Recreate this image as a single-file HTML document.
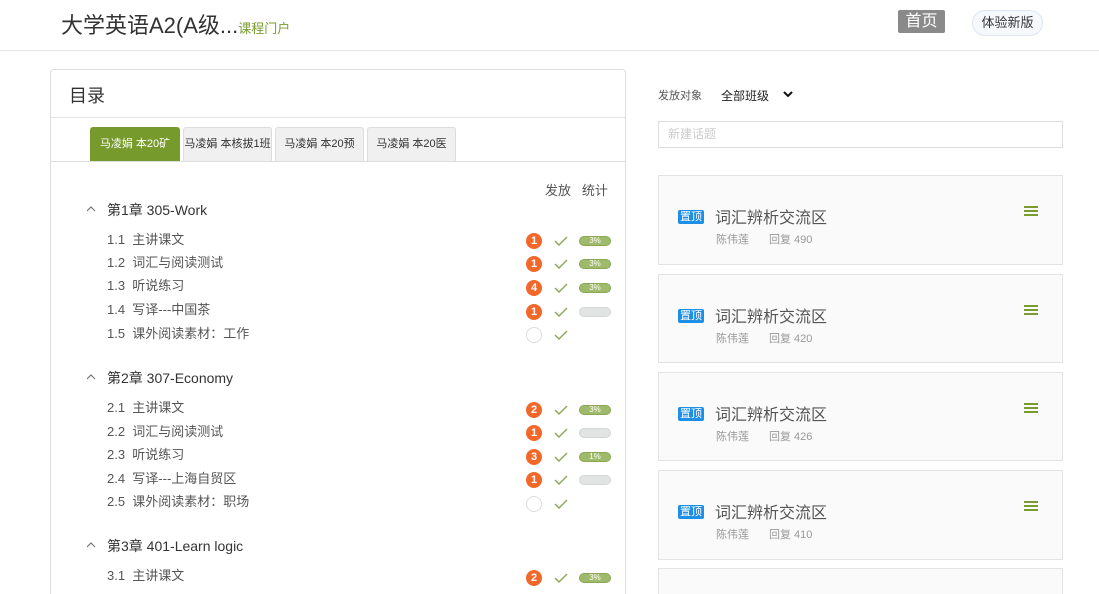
<!DOCTYPE html>
<html style="width:1099px;height:594px;overflow:hidden"><head><meta charset="utf-8"><style>
*{margin:0;padding:0;box-sizing:border-box}
body{width:1099px;height:594px;overflow:hidden;background:#fff;font-family:"Liberation Sans","Noto Sans CJK SC",sans-serif;position:relative;color:#333}
.a{position:absolute;white-space:nowrap}
.row{position:absolute;height:20px;line-height:20px;font-size:13px;color:#555;white-space:nowrap}
.ch{font-size:14px;color:#333}
.b{position:absolute;left:526px;width:16px;height:16px;border-radius:50%;background:#f2682a;color:#fff;font-size:11px;font-weight:bold;text-align:center;line-height:16px}
.c{position:absolute;left:526px;width:16px;height:16px;border-radius:50%;border:1.5px solid #ddd}
.k{position:absolute;left:554px;width:14px;height:10px}
.p{position:absolute;left:579px;width:32px;height:10px;border-radius:5px;background:#9fba6a;border:1px solid #8aa756;color:#fff;font-size:8px;text-align:center;line-height:8px}
.p.e{background:#e2e4e4;border-color:#d3d6d6}
.card{position:absolute;left:658px;width:405px;background:#fafafa;border:1px solid #e3e3e3}
.tag{position:absolute;left:19px;top:34px;background:#1e8fe6;color:#fff;font-size:11px;padding:0 2px;height:14px;line-height:14px;border-radius:2px}
.tt{position:absolute;left:56px;top:28px;font-size:16px;color:#555}
.mt{position:absolute;left:57px;top:55px;font-size:11px;color:#999}
.mt span{margin-left:20px}
.hb{position:absolute;right:24px;top:30px;width:14px}
.hb i{display:block;height:2px;background:#7a9c2e;margin-bottom:2px}
.tab{position:absolute;top:127px;width:89px;height:34px;background:#f0f0f0;border:1px solid #ddd;border-bottom:none;font-size:11px;text-align:center;line-height:33px;border-radius:3px 3px 0 0;color:#333;overflow:hidden}
</style></head><body>
<div class="a" style="left:61px;top:8px;font-size:22px;color:#333">大学英语A2(A级...<span style="font-size:13px;color:#7a9c2e">课程门户</span></div>
<div class="a" style="left:898px;top:10px;width:47px;height:23px;background:#8a8a8a;color:#fff;font-size:16px;text-align:center;line-height:23px;border-radius:2px">首页</div>
<div class="a" style="left:972px;top:10px;width:71px;height:26px;border:1px solid #dde6f0;background:#f6f9fc;border-radius:13px;font-size:13px;text-align:center;line-height:24px;color:#333">体验新版</div>
<div class="a" style="left:0;top:50px;width:1099px;height:1px;background:#e5e5e5"></div>

<div class="a" style="left:50px;top:69px;width:576px;height:525px;border:1px solid #ddd;border-bottom:none;border-radius:4px 4px 0 0"></div>
<div class="a" style="left:69px;top:82px;font-size:18px;color:#333">目录</div>
<div class="a" style="left:51px;top:117px;width:574px;height:1px;background:#e3e3e3"></div>
<div class="a" style="left:51px;top:161px;width:574px;height:1px;background:#ddd"></div>
<div class="a" style="left:90px;top:127px;width:90px;height:34px;background:#769a2c;color:#fff;font-size:11px;text-align:center;line-height:34px;border-radius:3px 3px 0 0">马凌娟 本20矿</div>
<div class="tab" style="left:183px">马凌娟 本核拔1班</div>
<div class="tab" style="left:275px">马凌娟 本20预</div>
<div class="tab" style="left:367px">马凌娟 本20医</div>
<div class="a" style="left:545px;top:180px;font-size:13px;color:#555">发放&nbsp;&nbsp;&nbsp;统计</div>

<svg class="a" style="left:0;top:0" width="0" height="0"><defs><path id="ck" d="M1 5 L5 9 L13 1" fill="none" stroke="#8aa756" stroke-width="1.4"/><path id="ch" d="M0 5 L4 1 L8 5" fill="none" stroke="#777" stroke-width="1.2"/></defs></svg>

<svg class="a" style="left:87px;top:206px" width="9" height="7"><use href="#ch"/></svg>
<div class="row ch" style="left:107px;top:200px">第1章 305-Work</div>
<div class="row" style="left:107px;top:230px">1.1&nbsp;&nbsp;主讲课文</div>
<div class="b" style="top:233px">1</div><svg class="k" style="top:236px"><use href="#ck"/></svg><div class="p" style="top:236px">3%</div>
<div class="row" style="left:107px;top:253px">1.2&nbsp;&nbsp;词汇与阅读测试</div>
<div class="b" style="top:256px">1</div><svg class="k" style="top:259px"><use href="#ck"/></svg><div class="p" style="top:259px">3%</div>
<div class="row" style="left:107px;top:276px">1.3&nbsp;&nbsp;听说练习</div>
<div class="b" style="top:280px">4</div><svg class="k" style="top:283px"><use href="#ck"/></svg><div class="p" style="top:283px">3%</div>
<div class="row" style="left:107px;top:300px">1.4&nbsp;&nbsp;写译---中国茶</div>
<div class="b" style="top:304px">1</div><svg class="k" style="top:307px"><use href="#ck"/></svg><div class="p e" style="top:307px"></div>
<div class="row" style="left:107px;top:324px">1.5&nbsp;&nbsp;课外阅读素材：工作</div>
<div class="c" style="top:327px"></div><svg class="k" style="top:330px"><use href="#ck"/></svg>

<svg class="a" style="left:87px;top:374px" width="9" height="7"><use href="#ch"/></svg>
<div class="row ch" style="left:107px;top:368px">第2章 307-Economy</div>
<div class="row" style="left:107px;top:398px">2.1&nbsp;&nbsp;主讲课文</div>
<div class="b" style="top:402px">2</div><svg class="k" style="top:405px"><use href="#ck"/></svg><div class="p" style="top:405px">3%</div>
<div class="row" style="left:107px;top:422px">2.2&nbsp;&nbsp;词汇与阅读测试</div>
<div class="b" style="top:425px">1</div><svg class="k" style="top:428px"><use href="#ck"/></svg><div class="p e" style="top:428px"></div>
<div class="row" style="left:107px;top:445px">2.3&nbsp;&nbsp;听说练习</div>
<div class="b" style="top:449px">3</div><svg class="k" style="top:452px"><use href="#ck"/></svg><div class="p" style="top:452px">1%</div>
<div class="row" style="left:107px;top:469px">2.4&nbsp;&nbsp;写译---上海自贸区</div>
<div class="b" style="top:472px">1</div><svg class="k" style="top:475px"><use href="#ck"/></svg><div class="p e" style="top:475px"></div>
<div class="row" style="left:107px;top:492px">2.5&nbsp;&nbsp;课外阅读素材：职场</div>
<div class="c" style="top:496px"></div><svg class="k" style="top:499px"><use href="#ck"/></svg>

<svg class="a" style="left:87px;top:542px" width="9" height="7"><use href="#ch"/></svg>
<div class="row ch" style="left:107px;top:536px">第3章 401-Learn logic</div>
<div class="row" style="left:107px;top:566px">3.1&nbsp;&nbsp;主讲课文</div>
<div class="b" style="top:570px">2</div><svg class="k" style="top:573px"><use href="#ck"/></svg><div class="p" style="top:573px">3%</div>

<div class="a" style="left:658px;top:87px;font-size:11px;color:#555">发放对象</div>
<div class="a" style="left:721px;top:87px;font-size:12px;color:#222">全部班级</div>
<svg class="a" style="left:783px;top:91px" width="10" height="8"><path d="M1 1 L5 5 L9 1" fill="none" stroke="#111" stroke-width="2"/></svg>
<div class="a" style="left:658px;top:121px;width:405px;height:27px;border:1px solid #ddd;font-size:12px;color:#ccc;line-height:25px;padding-left:9px">新建话题</div>

<div class="card" style="top:175px;height:90px"><div class="tag">置顶</div><div class="tt">词汇辨析交流区</div><div class="mt">陈伟莲<span>回复 490</span></div><div class="hb"><i></i><i></i><i></i></div></div>
<div class="card" style="top:274px;height:89px"><div class="tag">置顶</div><div class="tt">词汇辨析交流区</div><div class="mt">陈伟莲<span>回复 420</span></div><div class="hb"><i></i><i></i><i></i></div></div>
<div class="card" style="top:372px;height:89px"><div class="tag">置顶</div><div class="tt">词汇辨析交流区</div><div class="mt">陈伟莲<span>回复 426</span></div><div class="hb"><i></i><i></i><i></i></div></div>
<div class="card" style="top:470px;height:90px"><div class="tag">置顶</div><div class="tt">词汇辨析交流区</div><div class="mt">陈伟莲<span>回复 410</span></div><div class="hb"><i></i><i></i><i></i></div></div>
<div class="card" style="top:568px;height:26px;border-bottom:none"></div>
</body></html>
